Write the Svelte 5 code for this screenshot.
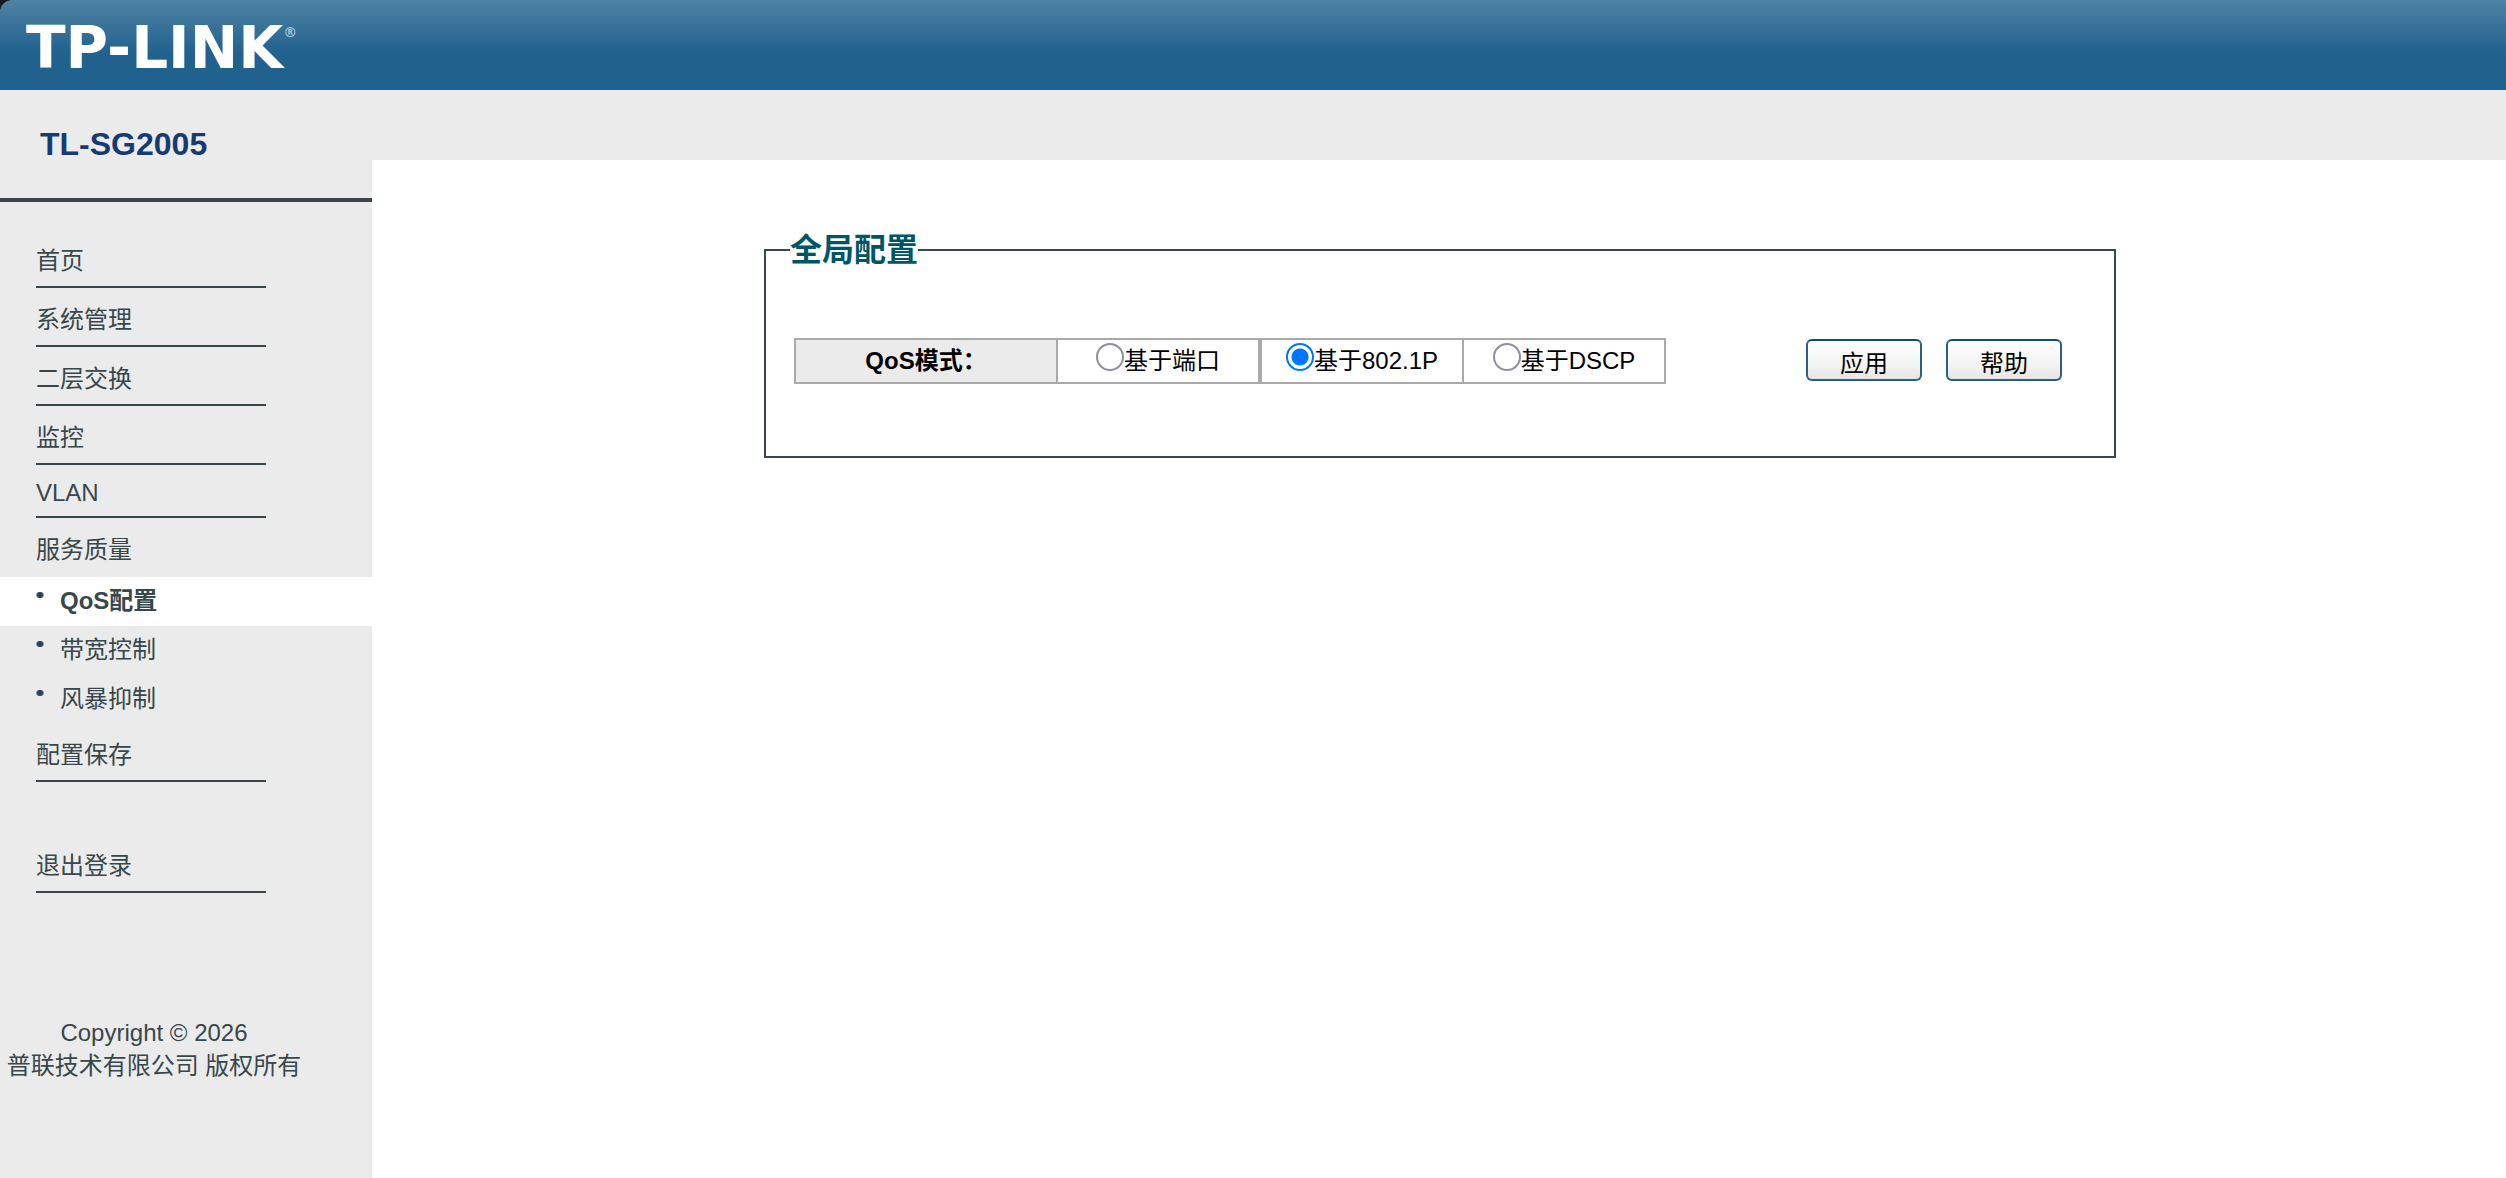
<script lang="ts">
  type MenuItem = {
    label: string;
    children?: string[];
  };

  const menu: MenuItem[] = [
    { label: "首页" },
    { label: "系统管理" },
    { label: "二层交换" },
    { label: "监控" },
    { label: "VLAN" },
    { label: "服务质量", children: ["QoS配置", "带宽控制", "风暴抑制"] },
    { label: "配置保存" },
  ];

  const modes = [
    { value: "port", label: "基于端口" },
    { value: "dot1p", label: "基于802.1P" },
    { value: "dscp", label: "基于DSCP" },
  ];

  let active = $state("QoS配置");
  let mode = $state("dot1p");
</script>

<div class="page">
  <header class="topbar">
    <div class="banner">
      <div class="logo">TP-LINK<span class="logo-reg">®</span></div>
    </div>
  </header>

  <div class="body">
    <aside class="sidebar">
      <h1 class="model">TL-SG2005</h1>

      <nav class="menu">
        {#each menu as item}
          {#if item.children}
            <a class="menu-item open" href="#menu">{item.label}</a>
            <div class="submenu">
              {#each item.children as child}
                <a
                  class="submenu-item"
                  class:active={active === child}
                  href="#menu"
                  onclick={() => (active = child)}
                >
                  <svg class="bullet" viewBox="0 0 8 8" aria-hidden="true">
                    <ellipse cx="4" cy="4" rx="4" ry="3" fill="#7d93ad" />
                    <circle cx="4" cy="4" r="3" fill="#2b4256" />
                  </svg>
                  {child}
                </a>
              {/each}
            </div>
          {:else}
            <a class="menu-item" class:latin={item.label === "VLAN"} href="#menu">{item.label}</a>
          {/if}
        {/each}
        <a class="menu-item logout" href="#logout">退出登录</a>
      </nav>

      <footer class="copyright">
        <div>Copyright © 2026</div>
        <div>普联技术有限公司 版权所有</div>
      </footer>
    </aside>

    <main class="content">
      <fieldset class="panel">
        <legend>全局配置</legend>
        <div class="panel-row">
          <table class="mode-table">
            <tbody>
              <tr>
                <th scope="row">QoS模式：</th>
                {#each modes as m}
                  <td>
                    <label>
                      <input type="radio" name="qos" value={m.value} bind:group={mode} />
                      <span>{m.label}</span>
                    </label>
                  </td>
                {/each}
              </tr>
            </tbody>
          </table>
          <div class="actions">
            <button type="button">应用</button>
            <button type="button">帮助</button>
          </div>
        </div>
      </fieldset>
    </main>
  </div>
</div>

<style>
  :global(body) {
    margin: 0;
    background: #fff;
  }

  .page {
    display: flex;
    flex-direction: column;
    min-height: 100vh;
    font-family: "Liberation Sans", Arial, "Noto Sans CJK SC", sans-serif;
    font-size: 24px;
    color: #000;
    background: #fff;
  }

  .topbar {
    background: #16181c;
  }

  .banner {
    display: flex;
    align-items: center;
    height: 90px;
    padding: 6px 0 0 26px;
    box-sizing: border-box;
    border-top-left-radius: 12px;
    background: linear-gradient(#4f84a8, #457b9f 12px, #21618e 54px, #21618e);
  }

  .logo {
    display: flex;
    align-items: flex-start;
    font-family: "DejaVu Sans", sans-serif;
    font-size: 58px;
    font-weight: 700;
    line-height: 56px;
    color: #fff;
  }

  .logo-reg {
    font-size: 14px;
    font-weight: 700;
    line-height: 24px;
    color: #a5c2d6;
  }

  .body {
    display: flex;
    flex: 1;
  }

  .sidebar {
    width: 372px;
    flex-shrink: 0;
    color: #37474c;
    background: #ebebeb;
  }

  .model {
    margin: 0;
    padding: 36px 40px 0;
    height: 108px;
    box-sizing: border-box;
    font-size: 32px;
    line-height: 36px;
    color: #173a70;
  }

  .menu {
    display: flex;
    flex-direction: column;
    padding-top: 27px;
    border-top: 4px solid #37474c;
  }

  .menu a {
    color: #37474c;
    text-decoration: none;
  }

  .menu-item {
    width: 230px;
    height: 59px;
    margin-left: 36px;
    padding-top: 14px;
    box-sizing: border-box;
    line-height: 36px;
    border-bottom: 2px solid #37474c;
  }

  .menu-item.latin {
    height: 53px;
    padding-top: 10px;
  }

  .menu-item.open {
    border-bottom: 0;
  }

  .submenu {
    margin-bottom: -1px;
  }

  .submenu-item {
    display: flex;
    align-items: center;
    gap: 16px;
    height: 49px;
    padding: 0 0 6px 36px;
    box-sizing: border-box;
  }

  .submenu-item.active {
    font-weight: 700;
    background: #fff;
  }

  .bullet {
    width: 8px;
    height: 8px;
    margin-bottom: 8px;
  }

  .logout {
    margin-top: 52px;
  }

  .copyright {
    padding: 123px 64px 0 0;
    line-height: 33px;
    text-align: center;
  }

  .content {
    flex: 1;
    padding: 70px 0 0 2px;
    background: linear-gradient(#ebebeb 70px, #fff 70px);
  }

  .panel {
    max-width: 1352px;
    margin: 66px auto 0;
    padding: 64px 28px 72px;
    box-sizing: border-box;
    border: 2px solid #37474c;
  }

  .panel legend {
    margin-left: -4px;
    padding: 0;
    font-size: 32px;
    font-weight: 700;
    line-height: 48px;
    color: #005566;
  }

  .panel-row {
    display: flex;
    align-items: center;
    justify-content: space-between;
  }

  .mode-table {
    border-spacing: 0;
    border: 2px solid #a9a9a9;
    border-right: 0;
  }

  .mode-table th,
  .mode-table td {
    height: 42px;
    padding: 0;
    line-height: 36px;
    text-align: center;
    border-right: 2px solid #a9a9a9;
  }

  .mode-table th {
    width: 260px;
    background: #ebebeb;
  }

  .mode-table td {
    width: 200px;
  }

  .mode-table td:nth-child(2) {
    border-right-width: 4px;
  }

  .mode-table label {
    display: flex;
    align-items: center;
    justify-content: center;
  }

  .mode-table input {
    appearance: none;
    width: 28px;
    height: 28px;
    margin: 0 0 8px;
    border: 2px solid #8f8f9d;
    border-radius: 50%;
    background: #fff;
  }

  .mode-table input:checked {
    border-color: #0075ff;
    background: radial-gradient(circle, #0075ff 8px, #fff 9px);
  }

  .actions {
    display: flex;
    gap: 24px;
    margin-right: 24px;
    padding-bottom: 2px;
  }

  .actions button {
    width: 116px;
    height: 42px;
    padding: 8px 0 0;
    font: inherit;
    line-height: 30px;
    color: #000;
    border: 2px solid #2a5f8c;
    border-top-color: #114a78;
    border-radius: 6px;
    background: linear-gradient(#fff, #f4f4f4 60%, #e6e6e4);
  }
</style>
